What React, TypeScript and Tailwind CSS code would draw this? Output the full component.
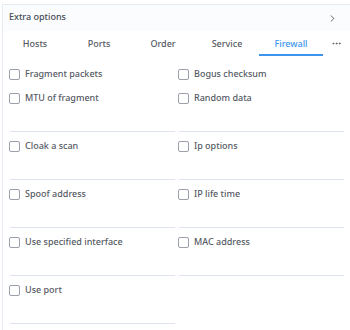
import { ChevronRight, Ellipsis } from 'lucide-react';

type Option = { left: string; right?: string; input: boolean };

const tabs = ['Hosts', 'Ports', 'Order', 'Service', 'Firewall'];

const options: Option[] = [
    { left: 'Fragment packets', right: 'Bogus checksum', input: false },
    { left: 'MTU of fragment', right: 'Random data', input: true },
    { left: 'Cloak a scan', right: 'Ip options', input: true },
    { left: 'Spoof address', right: 'IP life time', input: true },
    { left: 'Use specified interface', right: 'MAC address', input: true },
    { left: 'Use port', input: true },
];

function Field({ label, input }: { label: string; input: boolean }) {
    return (
        <div className="mt-1">
            <label className="flex h-5 items-center gap-[5px]">
                <span className="h-[11px] w-[11px] shrink-0 rounded-[2px] border border-[#9aa1ad] bg-white" />
                <span className="text-[9px] font-medium text-[#555a64]">{label}</span>
            </label>
            {input && <div className="ml-[1px] h-[24px] border-b border-[#dde4f0]" />}
        </div>
    );
}

export default function App() {
    return (
        <div
            className="h-[330px] w-[350px] overflow-hidden bg-white pt-1 pl-[2px]"
            style={{ fontFamily: '"Noto Sans", sans-serif' }}
        >
            <div className="h-full border-t border-l border-[#e6ebf3]">
                {/* Header */}
                <div className="flex h-[26px] items-center justify-between bg-[#fbfcfd] pl-[6px] pr-[12px]">
                    <span className="mb-[3px] text-[9px] font-medium text-[#454a54]">Extra options</span>
                    <ChevronRight size={11} strokeWidth={1.6} className="mt-[1px] text-[#333]" />
                </div>

                {/* Tabs */}
                <div className="flex h-[25px] items-stretch">
                    {tabs.map((t) => (
                        <div
                            key={t}
                            className={`flex w-16 items-center justify-center text-[9px] font-medium ${
                                t === 'Firewall'
                                    ? 'border-b-2 border-[#3d95ee] pt-[2px] text-[#3d95ee]'
                                    : 'text-[#555a64]'
                            }`}
                        >
                            {t}
                        </div>
                    ))}
                    <div className="flex flex-1 items-center justify-center text-[#555]">
                        <Ellipsis size={11} />
                    </div>
                </div>

                {/* Options */}
                <div className="grid grid-cols-2 gap-x-[3px] pt-[4px] pl-[6px] pr-[6px]">
                    {options.map((o) => (
                        <div key={o.left} className="contents">
                            <Field label={o.left} input={o.input} />
                            {o.right ? <Field label={o.right} input={o.input} /> : <div />}
                        </div>
                    ))}
                </div>
            </div>
        </div>
    );
}
